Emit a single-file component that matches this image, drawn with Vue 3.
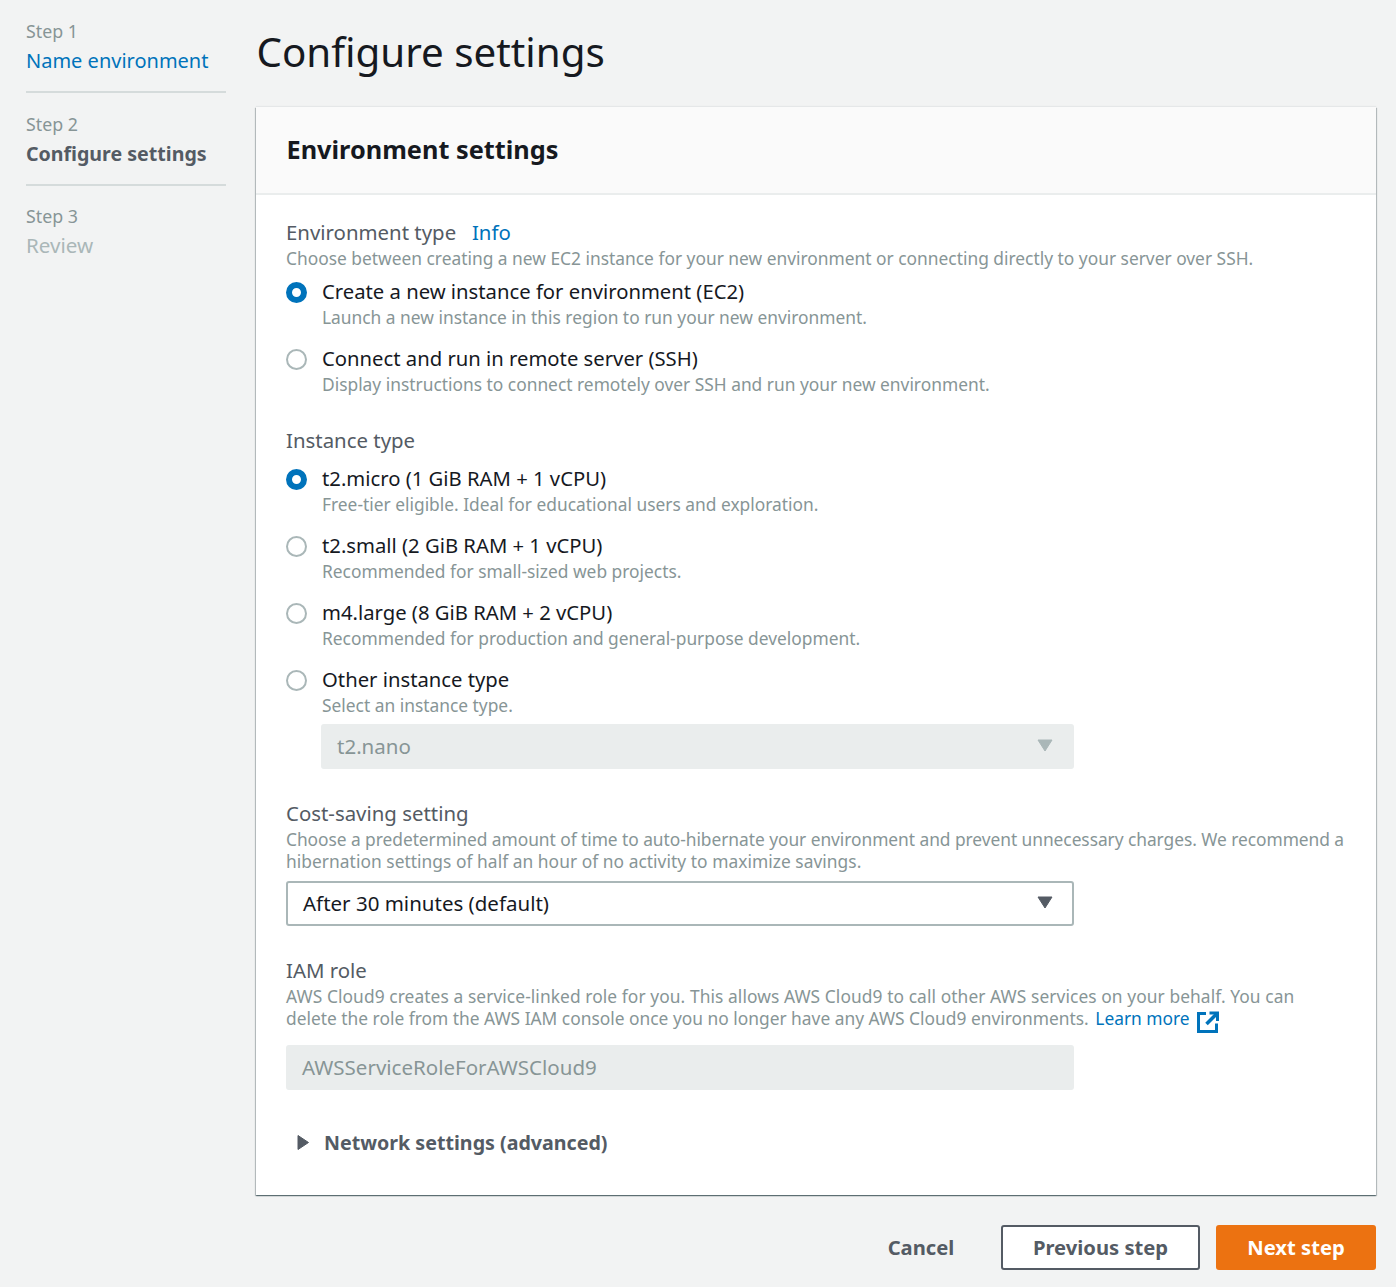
<template>
  <div class="page">
    <nav class="steps">
      <div v-for="(step, i) in steps" :key="step.num" class="step" :class="{ divided: i < steps.length - 1 }">
        <div class="step-num">{{ step.num }}</div>
        <div class="step-name" :class="step.state">{{ step.name }}</div>
      </div>
    </nav>

    <main class="main">
      <h1>Configure settings</h1>

      <section class="card">
        <header class="card-head">
          <h2>Environment settings</h2>
        </header>
        <div class="card-body">
          <div class="field env-field">
            <div class="label">Environment type <a class="info">Info</a></div>
            <p class="desc">Choose between creating a new EC2 instance for your new environment or connecting directly to your server over SSH.</p>
            <div class="radios">
              <div v-for="opt in envOptions" :key="opt.title" class="radio-row">
                <span class="radio" :class="{ on: opt.on }"></span>
                <div>
                  <div class="radio-title">{{ opt.title }}</div>
                  <div class="radio-desc">{{ opt.desc }}</div>
                </div>
              </div>
            </div>
          </div>

          <div class="field instance-field">
            <div class="label">Instance type</div>
            <div class="radios">
              <div v-for="opt in instanceOptions" :key="opt.title" class="radio-row">
                <span class="radio" :class="{ on: opt.on }"></span>
                <div>
                  <div class="radio-title">{{ opt.title }}</div>
                  <div class="radio-desc">{{ opt.desc }}</div>
                </div>
              </div>
            </div>
            <div class="select disabled nested">
              <span>t2.nano</span>
              <svg class="caret" width="16" height="13" viewBox="0 0 16 13"><path d="M1 1h14L8 12z" fill="#aab7b8" stroke="#aab7b8" stroke-linejoin="round"/></svg>
            </div>
          </div>

          <div class="field cost-field">
            <div class="label">Cost-saving setting</div>
            <p class="desc"><span class="tight">Choose a predetermined amount of time to auto-hibernate your environment and prevent unnecessary charges. We recommend a</span><br><span class="loose">hibernation settings of half an hour of no activity to maximize savings.</span></p>
            <div class="select active">
              <span>After 30 minutes (default)</span>
              <svg class="caret" width="16" height="13" viewBox="0 0 16 13"><path d="M1 1h14L8 12z" fill="#545b64" stroke="#545b64" stroke-linejoin="round"/></svg>
            </div>
          </div>

          <div class="field iam-field">
            <div class="label">IAM role</div>
            <p class="desc"><span class="wide">AWS Cloud9 creates a service-linked role for you. This allows AWS Cloud9 to call other AWS services on your behalf. You can</span><br>delete the role from the AWS IAM console once you no longer have any AWS Cloud9 environments. <a class="info small">Learn more</a><svg class="ext" width="22" height="22" viewBox="0 0 22 22" fill="none" stroke="#0073bb" stroke-width="3"><path d="M9 2.5H1.5v18h18v-8"/><path d="M12.5 2h8v8" /><path d="M19.5 3L9.5 13" stroke-width="3.5"/></svg>
            </p>
            <div class="select disabled role">AWSServiceRoleForAWSCloud9</div>
          </div>

          <div class="network">
            <svg width="13" height="17" viewBox="0 0 13 17"><path d="M1 1.5l10.5 7L1 15.5z" fill="#545b64" stroke="#545b64" stroke-linejoin="round"/></svg>
            <span>Network settings (advanced)</span>
          </div>
        </div>
      </section>

      <footer class="actions">
        <button class="btn link">Cancel</button>
        <button class="btn normal">Previous step</button>
        <button class="btn primary">Next step</button>
      </footer>
    </main>
  </div>
</template>

<script setup>
const steps = [
  { num: 'Step 1', name: 'Name environment', state: 'done' },
  { num: 'Step 2', name: 'Configure settings', state: 'current' },
  { num: 'Step 3', name: 'Review', state: 'todo' }
]

const envOptions = [
  { title: 'Create a new instance for environment (EC2)', desc: 'Launch a new instance in this region to run your new environment.', on: true },
  { title: 'Connect and run in remote server (SSH)', desc: 'Display instructions to connect remotely over SSH and run your new environment.' }
]

const instanceOptions = [
  { title: 't2.micro (1 GiB RAM + 1 vCPU)', desc: 'Free-tier eligible. Ideal for educational users and exploration.', on: true },
  { title: 't2.small (2 GiB RAM + 1 vCPU)', desc: 'Recommended for small-sized web projects.' },
  { title: 'm4.large (8 GiB RAM + 2 vCPU)', desc: 'Recommended for production and general-purpose development.' },
  { title: 'Other instance type', desc: 'Select an instance type.' }
]
</script>

<style>
html, body {
  background: #f2f3f3;
}
</style>

<style scoped>
.page {
  display: flex;
  align-items: flex-start;
  height: 1287px;
  box-sizing: border-box;
  padding: 0 20px 0 26px;
  font-family: "Noto Sans", "Liberation Sans", sans-serif;
  color: #16191f;
  background: #f2f3f3;
  overflow: hidden;
}
.steps {
  width: 200px;
  flex: none;
  margin-right: 30px;
  padding-top: 16px;
}
.step {
  padding-bottom: 15px;
  margin-bottom: 15.5px;
}
.step.divided {
  border-bottom: 2px solid #d5dbdb;
}
.step-num {
  font-size: 17.8px;
  line-height: 30px;
  color: #879596;
}
.step-name {
  font-size: 20px;
  line-height: 30px;
}
.step-name.done { color: #0073bb; }
.step-name.current { color: #545b64; font-weight: 700; font-size: 19.6px; }
.step-name.todo { color: #aab7b8; font-size: 20.6px; line-height: 28px; }

.main {
  flex: 1;
  min-width: 0;
}
h1 {
  margin: 0;
  height: 107px;
  padding: 25px 0 0 0.5px;
  box-sizing: border-box;
  font-size: 40.3px;
  line-height: 54px;
  font-weight: 400;
}
.card {
  background: #fff;
  box-shadow: 0 1px 1px 0 rgba(0, 28, 36, 0.4), 1px 1px 1px 0 rgba(0, 28, 36, 0.2), -1px 1px 1px 0 rgba(0, 28, 36, 0.2), 0 -1px 1px 0 rgba(0, 28, 36, 0.05);
  height: 1088px;
}
.card-head {
  height: 88px;
  box-sizing: border-box;
  display: flex;
  align-items: center;
  padding: 0 30.5px 3px;
  background: #fafafa;
  border-bottom: 2px solid #eaeded;
}
h2 {
  margin: 0;
  font-size: 25.3px;
  font-weight: 700;
}
.card-body {
  padding: 24px 30px 0;
}
.label {
  font-size: 20.4px;
  line-height: 26px;
  color: #545b64;
}
.info {
  margin-left: 10.5px;
  color: #0073bb;
}
.info.small {
  margin-left: 2px;
}
.desc {
  margin: 2px 0 0;
  font-size: 17.36px;
  line-height: 22px;
  white-space: nowrap;
  color: #879596;
}
.tight {
  letter-spacing: -0.05px;
}
.loose {
  letter-spacing: 0.04px;
}
.wide {
  letter-spacing: 0.08px;
}
.radios {
  display: flex;
  flex-direction: column;
  gap: 14px;
  margin-top: 9px;
}
.instance-field .radios {
  margin-top: 12px;
}
.radio-row {
  display: flex;
  gap: 15px;
  min-height: 53px;
}
.radio {
  flex: none;
  width: 21px;
  height: 21px;
  margin-top: 4px;
  box-sizing: border-box;
  border: 2px solid #aab7b8;
  border-radius: 50%;
  background: #fff;
}
.radio.on {
  border: 6.5px solid #0073bb;
}
.radio-title {
  font-size: 20.25px;
  line-height: 26px;
  color: #16191f;
}
.radio-desc {
  font-size: 17.36px;
  line-height: 26px;
  color: #879596;
}
.instance-field {
  margin-top: 29px;
}
.select {
  width: 788px;
  height: 45px;
  box-sizing: border-box;
  display: flex;
  align-items: center;
  justify-content: space-between;
  border-radius: 3px;
  padding: 0 21px 2px 16px;
  font-size: 20.5px;
}
.select.disabled {
  background: #eaeded;
  color: #879596;
}
.select.nested {
  width: 753px;
  margin: 5px 0 0 35px;
}
.select.active {
  border: 2px solid #aab7b8;
  margin-top: 9px;
  padding: 0 19px 2px 15px;
  color: #16191f;
}
.cost-field {
  margin-top: 31px;
}
.iam-field {
  margin-top: 31px;
}
.ext {
  vertical-align: -2px;
  margin: -6px 0 -6px 7px;
}
.role {
  margin-top: 16px;
}
.network {
  display: flex;
  align-items: center;
  gap: 14px;
  margin: 39px 0 0 11px;
  font-size: 19.65px;
  font-weight: 700;
  color: #545b64;
}
.actions {
  display: flex;
  justify-content: flex-end;
  align-items: center;
  gap: 16px;
  margin-top: 30px;
}
.btn {
  height: 45px;
  box-sizing: border-box;
  border-radius: 3px;
  font-family: inherit;
  font-size: 20.2px;
  font-weight: 700;
  padding: 0 0 2px;
}
.btn.link {
  width: 130px;
  margin-right: -1px;
  border: none;
  background: none;
  color: #545b64;
}
.btn.normal {
  width: 199px;
  border: 2px solid #545b64;
  background: #fff;
  color: #545b64;
}
.btn.primary {
  width: 160px;
  border: none;
  background: #ec7211;
  color: #fff;
}
</style>
